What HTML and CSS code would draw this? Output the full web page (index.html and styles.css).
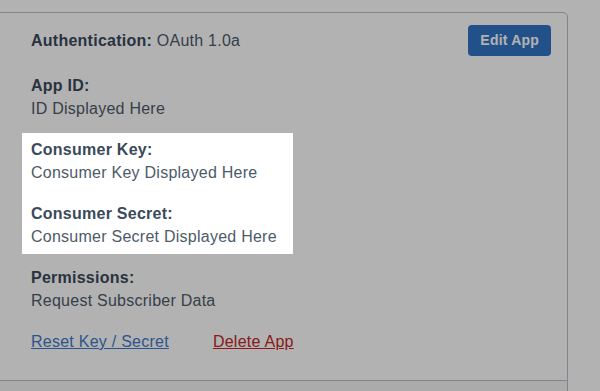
FILE: index.html
```html
<!DOCTYPE html>
<html lang="en">
  <head>
    <meta charset="UTF-8" />
    <meta name="viewport" content="width=device-width, initial-scale=1.0" />
    <title>App Details</title>
    <link rel="stylesheet" href="styles.css">
  </head>
  <body>
    <div class="card">
      <div class="card-body">
        <div class="card-head">
          <div class="auth"><span class="label">Authentication:</span> OAuth 1.0a</div>
          <a href="javascript:;" class="btn">Edit App</a>
        </div>
        <div class="field">
          <div class="label">App ID:</div>
          <div class="value">ID Displayed Here</div>
        </div>
        <!-- 高亮区域 -->
        <div class="spotlight">
          <div class="field">
            <div class="label">Consumer Key:</div>
            <div class="value">Consumer Key Displayed Here</div>
          </div>
          <div class="field">
            <div class="label">Consumer Secret:</div>
            <div class="value">Consumer Secret Displayed Here</div>
          </div>
        </div>
        <div class="field">
          <div class="label">Permissions:</div>
          <div class="value">Request Subscriber Data</div>
        </div>
        <div class="links">
          <a href="javascript:;" class="link">Reset Key / Secret</a>
          <a href="javascript:;" class="link danger">Delete App</a>
        </div>
      </div>
      <div class="card-foot"></div>
    </div>
  </body>
</html>
```

FILE: styles.css
```css
* {
  margin: 0;
  padding: 0;
  box-sizing: border-box;
}
body {
  background-color: #fff;
  font-family: "Liberation Sans", Arial, sans-serif;
  font-size: 16px;
  letter-spacing: 0.25px;
  line-height: 23px;
  color: #4d5b69;
  overflow: hidden;
}
.card {
  margin: 12px 32px 0 -10px;
  border: 1px solid #b3c1cd;
  border-radius: 0 5px 0 0;
  background-color: #fff;
}
.card-body {
  padding: 12px 16px 27px 40px;
  border-bottom: 1px solid #b3c1cd;
}
.card-head {
  display: flex;
  justify-content: space-between;
  align-items: center;
  margin-bottom: 18px;
}
.label {
  font-weight: bold;
  color: #3a4a5b;
}
.auth {
  color: #4d5b69;
}
.btn {
  display: block;
  height: 31px;
  line-height: 31px;
  padding: 0 12px;
  font-size: 14px;
  letter-spacing: 0.2px;
  font-weight: bold;
  color: #fff;
  text-decoration: none;
  background-color: #3275c4;
  border-radius: 4px;
}
.field {
  margin-bottom: 18px;
}
.spotlight {
  position: relative;
  z-index: 10;
  width: fit-content;
  margin: -5px 0 12px -9px;
  padding: 5px 16px 6px 9px;
  background-color: #fff;
  box-shadow: 0 0 0 3000px rgba(0, 0, 0, 0.3);
}
.spotlight .field:last-child {
  margin-bottom: 0;
}
.links {
  display: flex;
  gap: 44px;
}
.link {
  color: #3f7acb;
  text-decoration: underline;
}
.link.danger {
  color: #c42727;
}
.card-foot {
  height: 40px;
  background-color: #f5f5f5;
}
```
